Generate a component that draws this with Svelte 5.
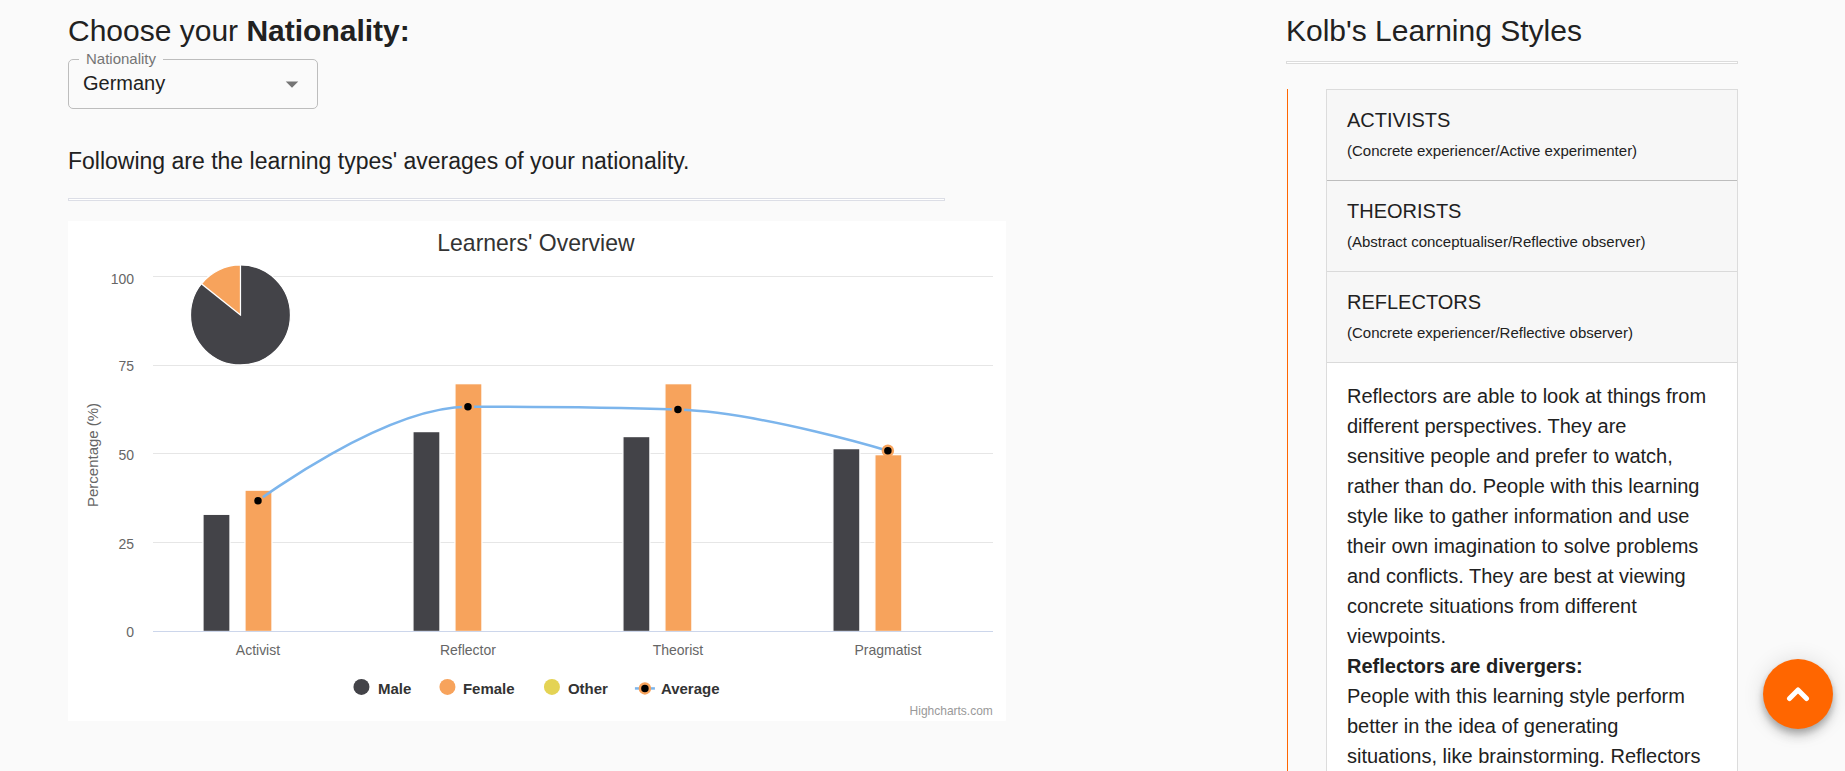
<script>
  const styles = [
    { name: 'ACTIVISTS', detail: '(Concrete experiencer/Active experimenter)', open: false },
    { name: 'THEORISTS', detail: '(Abstract conceptualiser/Reflective observer)', open: false },
    { name: 'REFLECTORS', detail: '(Concrete experiencer/Reflective observer)', open: true }
  ];

  const categories = [
    { name: 'Activist', male: 33, female: 39.8, average: 36.8 },
    { name: 'Reflector', male: 56.3, female: 69.8, average: 63.3 },
    { name: 'Theorist', male: 54.9, female: 69.8, average: 62.5 },
    { name: 'Pragmatist', male: 51.5, female: 49.8, average: 50.9 }
  ];

  const plot = { left: 85, right: 925, base: 410.5, scale: 3.55 };
  const step = (plot.right - plot.left) / categories.length;
  const ticks = [100, 75, 50, 25, 0];
  const barWidth = 27;

  const yOf = (v) => plot.base - v * plot.scale;
  const xOf = (i) => plot.left + step * (i + 0.5);

  const points = categories.map((c, i) => ({ x: xOf(i), y: yOf(c.average) }));

  // Spline whose control points never overshoot a neighbouring value.
  function spline(p) {
    let d = `M ${p[0].x} ${p[0].y}`;
    let right = p[0];
    for (let i = 1; i < p.length; i++) {
      let left = p[i];
      let nextRight = p[i];
      if (i < p.length - 1) {
        const a = p[i - 1], b = p[i], c = p[i + 1];
        let lx = (1.5 * b.x + a.x) / 2.5, ly = (1.5 * b.y + a.y) / 2.5;
        let rx = (1.5 * b.x + c.x) / 2.5, ry = (1.5 * b.y + c.y) / 2.5;
        const fix = ((ry - ly) * (rx - b.x)) / (rx - lx) + b.y - ry;
        ly += fix;
        ry += fix;
        if (ly > a.y && ly > b.y) { ly = Math.max(a.y, b.y); ry = 2 * b.y - ly; }
        else if (ly < a.y && ly < b.y) { ly = Math.min(a.y, b.y); ry = 2 * b.y - ly; }
        if (ry > c.y && ry > b.y) { ry = Math.max(c.y, b.y); ly = 2 * b.y - ry; }
        else if (ry < c.y && ry < b.y) { ry = Math.min(c.y, b.y); ly = 2 * b.y - ry; }
        left = { x: lx, y: ly };
        nextRight = { x: rx, y: ry };
      }
      d += ` C ${right.x} ${right.y} ${left.x} ${left.y} ${p[i].x} ${p[i].y}`;
      right = nextRight;
    }
    return d;
  }

  const line = spline(points);
  let nationality = $state('Germany');
</script>

<main class="page">
  <section class="overview">
    <h1>Choose your <b>Nationality:</b></h1>
    <div class="field">
      <label for="nationality">Nationality</label>
      <select id="nationality" bind:value={nationality}>
        <option>Germany</option>
      </select>
      <svg class="caret" viewBox="0 0 24 24" aria-hidden="true"><path d="M7 10l5 5 5-5z" /></svg>
    </div>
    <p class="intro">Following are the learning types' averages of your nationality.</p>
    <hr class="rule" />

    <svg class="chart" viewBox="0 0 938 500" role="img" aria-label="Learners' Overview">
      <rect width="938" height="500" fill="#fff" />
      <text class="title" x="468" y="30">Learners' Overview</text>

      {#each ticks as t}
        {#if t > 0}
          <line x1={plot.left} x2={plot.right} y1={yOf(t)} y2={yOf(t)} class="grid" />
        {/if}
        <text class="tick" x="66" y={Math.max(63, yOf(t) + 6)}>{t}</text>
      {/each}
      <text class="axis-title" transform="translate(30 234) rotate(-90)">Percentage (%)</text>

      {#each categories as c, i}
        <rect class="bar male" x={xOf(i) - 55} y={yOf(c.male)} width={barWidth} height={c.male * plot.scale} />
        <rect class="bar female" x={xOf(i) - 13} y={yOf(c.female)} width={barWidth} height={c.female * plot.scale} />
        <text class="category" x={xOf(i)} y="434">{c.name}</text>
      {/each}
      <line x1={plot.left} x2={plot.right} y1={plot.base} y2={plot.base} class="axis" />

      <path class="average" d={line} />
      {#each points as p}
        <circle class="marker" cx={p.x} cy={p.y} r="5" />
      {/each}

      <circle class="slice male" cx="172.5" cy="94" r="50" />
      <path class="slice female" d="M172.5 94 L133.5 62.8 A50 50 0 0 1 172.5 44 Z" />

      <g class="legend">
        <circle class="male" cx="293.5" cy="466" r="8" />
        <text x="310" y="473">Male</text>
        <circle class="female" cx="379.5" cy="466" r="8" />
        <text x="395" y="473">Female</text>
        <circle class="other" cx="484" cy="466" r="8" />
        <text x="500" y="473">Other</text>
        <path class="average" d="M567 467.5h20" />
        <circle class="marker" cx="577" cy="467.5" r="5" />
        <text x="593" y="473">Average</text>
      </g>
      <text class="credit" x="925" y="494">Highcharts.com</text>
    </svg>
  </section>

  <aside class="styles">
    <h2>Kolb's Learning Styles</h2>
    <hr />
    <div class="track">
      <div class="accordion">
        {#each styles as s}
          <button type="button" class="summary" aria-expanded={s.open}>
            <span class="name">{s.name}</span>
            <span class="detail">{s.detail}</span>
          </button>
          {#if s.open}
            <div class="content">
              Reflectors are able to look at things from different perspectives. They are sensitive people and
              prefer to watch, rather than do. People with this learning style like to gather information and use
              their own imagination to solve problems and conflicts. They are best at viewing concrete situations
              from different viewpoints.<br />
              <b>Reflectors are divergers:</b><br />
              People with this learning style perform better in the idea of generating situations, like
              brainstorming. Reflectors
            </div>
          {/if}
        {/each}
      </div>
    </div>
  </aside>

  <button type="button" class="to-top" aria-label="Back to top">
    <svg viewBox="0 0 24 16" aria-hidden="true"><path d="M3.5 12.5L12 4L20.5 12.5" /></svg>
  </button>
</main>

<style>
  :global(body) {
    background: #fafafa;
    overflow: hidden;
  }
  .page {
    box-sizing: border-box;
    height: 100vh;
    overflow: hidden;
    display: grid;
    grid-template-columns: minmax(0, 1218fr) minmax(0, 452fr);
    padding: 11px 107px 0 68px;
    font-family: "Liberation Sans", Arial, sans-serif;
    font-size: 20px;
    line-height: 30px;
    color: #212121;
  }
  h1, h2 {
    margin: 0;
    font-size: 30px;
    font-weight: 400;
    line-height: 40px;
  }
  hr {
    box-sizing: border-box;
    height: 3px;
    margin: 0;
    border: 1px solid #dcdcdc;
    background: #fff;
  }
  .rule {
    width: 72%;
    border-color: #dcdee6;
  }
  .field {
    position: relative;
    width: 250px;
    margin-top: 8px;
  }
  .field label {
    position: absolute;
    left: 11px;
    top: -10px;
    padding: 0 7px;
    background: #fafafa;
    font-size: 15px;
    line-height: 20px;
    color: #757575;
  }
  select {
    display: block;
    box-sizing: border-box;
    width: 100%;
    height: 50px;
    padding: 0 40px 2px 14px;
    appearance: none;
    border: 1px solid #bdbdbd;
    border-radius: 5px;
    background: transparent;
    font: inherit;
    color: inherit;
  }
  .caret {
    position: absolute;
    right: 11px;
    top: 10px;
    width: 30px;
    height: 30px;
    fill: #757575;
    pointer-events: none;
  }
  .intro {
    margin: 37px 0 22px;
    font-size: 23px;
  }
  .chart {
    display: block;
    width: 77%;
    margin-top: 20px;
  }
  .chart text { fill: #666; font-size: 14px; }
  .chart .title { fill: #333; font-size: 23px; text-anchor: middle; }
  .chart .tick { text-anchor: end; }
  .chart .category, .chart .axis-title { text-anchor: middle; }
  .chart .axis-title { font-size: 15px; }
  .chart .legend text { fill: #333; font-size: 15px; font-weight: 700; }
  .chart .credit { fill: #999; font-size: 12px; text-anchor: end; }
  .grid, .axis { stroke-width: 1; shape-rendering: crispEdges; }
  .grid { stroke: #e6e6e6; }
  .axis { stroke: #ccd6eb; }
  .male { fill: #434348; }
  .female { fill: #f7a35c; }
  .other { fill: #e4d354; }
  .bar, .slice { stroke: #fff; stroke-width: 1.25; }
  .average { fill: none; stroke: #7cb5ec; stroke-width: 2.5; }
  .marker { fill: #000; stroke: #f7a35c; stroke-width: 2.5; }

  .styles hr { margin-top: 10px; }
  .track {
    margin: 25px 0 0 1px;
    padding-left: 38px;
    border-left: 1px solid #ff6600;
  }
  .accordion {
    border: 1px solid #dcdcdc;
  }
  .summary {
    display: block;
    box-sizing: border-box;
    width: 100%;
    height: 91px;
    padding: 15px 20px 13px;
    border: 0;
    border-bottom: 1px solid #dadada;
    background: #f7f7f7;
    font: inherit;
    color: inherit;
    text-align: left;
  }
  .summary:first-child { border-bottom-color: #bdbdbd; }
  .name, .detail { display: block; }
  .detail { font-size: 15px; line-height: 32px; }
  .content {
    padding: 18px 28px 18px 20px;
    background: #fff;
  }
  .to-top {
    position: fixed;
    right: 12px;
    bottom: 42px;
    width: 70px;
    height: 70px;
    display: grid;
    place-items: center;
    padding: 0;
    border: 0;
    border-radius: 50%;
    background: #ff6600;
    box-shadow: 0 4px 6px rgba(0, 0, 0, 0.2), 0 8px 12px rgba(0, 0, 0, 0.14), 0 1px 22px rgba(0, 0, 0, 0.12);
  }
  .to-top svg {
    width: 24px;
    height: 16px;
    fill: none;
    stroke: #fff;
    stroke-width: 5;
    stroke-linejoin: round;
    stroke-linecap: round;
  }
</style>
